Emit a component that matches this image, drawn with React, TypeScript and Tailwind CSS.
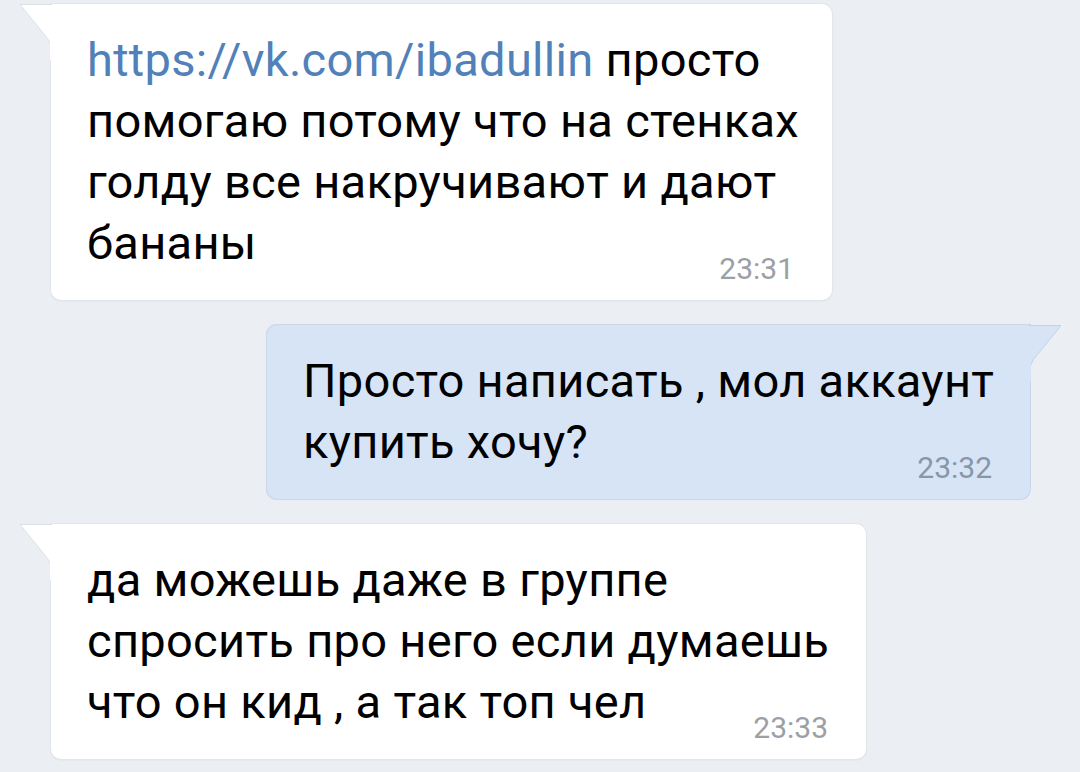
import React from 'react';

type Msg = {
  out: boolean;
  lines: React.ReactNode[];
  time: string;
  width: string;
};

const messages: Msg[] = [
  {
    out: false,
    width: 'w-[781px]',
    time: '23:31',
    lines: [
      <>
        <span className="text-[#5181b8]">https://vk.com/ibadullin</span> просто
      </>,
      'помогаю потому что на стенках',
      'голду все накручивают и дают',
      'бананы',
    ],
  },
  {
    out: true,
    width: 'w-[763px]',
    time: '23:32',
    lines: ['Просто написать , мол аккаунт', 'купить хочу?'],
  },
  {
    out: false,
    width: 'w-[815px]',
    time: '23:33',
    lines: ['да можешь даже в группе', 'спросить про него если думаешь', 'что он кид , а так топ чел'],
  },
];

function Tail({ out }: { out: boolean }) {
  // little corner flag at the top of the bubble
  if (out) {
    return (
      <svg className="absolute -right-[31px] top-0" width="32" height="56" viewBox="0 0 32 56">
        <path d="M32 0.5 L0 0.5 L0 52 Q0 38 8 30 Z" fill="#d6e4f6" stroke="#c3d2e4" strokeWidth="1" />
        <rect x="0" y="1" width="2" height="55" fill="#d6e4f6" />
      </svg>
    );
  }
  return (
    <svg className="absolute -left-[31px] top-0" width="32" height="56" viewBox="0 0 32 56">
      <path d="M0 0.5 L32 0.5 L32 52 Q32 38 24 30 Z" fill="#ffffff" stroke="#dde1e7" strokeWidth="1" />
      <rect x="30" y="1" width="2" height="55" fill="#ffffff" />
    </svg>
  );
}

function Bubble({ m }: { m: Msg }) {
  return (
    <div className={`flex ${m.out ? 'justify-end pr-[50px]' : 'justify-start pl-[51px]'}`}>
      <div
        className={`relative ${m.width} rounded-[10px] pl-[36px] pr-[38px] pt-[25px] pb-[16px] ${
          m.out
            ? 'bg-[#d6e4f6] rounded-tr-none shadow-[0_0_0_1px_#c9d7e8,0_1px_1px_rgba(0,0,0,0.08)]'
            : 'bg-white rounded-tl-none shadow-[0_0_0_1px_#e2e6eb,0_1px_2px_rgba(0,0,0,0.1)]'
        }`}
      >
        <Tail out={m.out} />
        <div className="text-[47px] leading-[61px] tracking-[0.3px] text-black">
          {m.lines.map((l, i) => (
            <div key={i} className="whitespace-nowrap">
              {l}
            </div>
          ))}
        </div>
        <div className="flex justify-end -mt-[19px]">
          <span className={`text-[30px] leading-[30px] ${m.out ? 'text-[#8797a9]' : 'text-[#9ba0a6]'}`}>{m.time}</span>
        </div>
      </div>
    </div>
  );
}

export default function App() {
  return (
    <div
      className="w-[1080px] h-[772px] overflow-hidden bg-[#ebeef2] pt-[4px] flex flex-col gap-[25px]"
      style={{ fontFamily: 'Roboto, "Noto Sans", sans-serif' }}
    >
      {messages.map((m, i) => (
        <Bubble key={i} m={m} />
      ))}
    </div>
  );
}
